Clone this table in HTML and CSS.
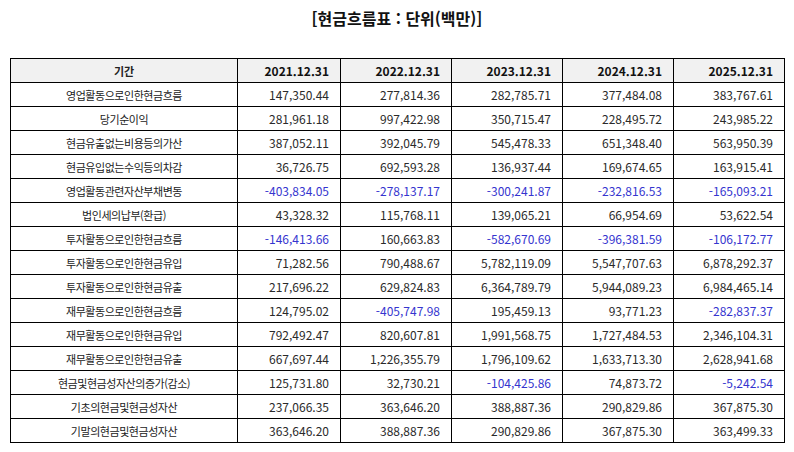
FILE: index.html
```html
<!DOCTYPE html>
<html lang="ko">
<head>
<meta charset="utf-8">
<title>현금흐름표</title>
<link rel="stylesheet" href="styles.css">
</head>
<body>
<div class="page">
  <h1 class="title">[현금흐름표 : 단위(백만)]</h1>
  <table class="cf">
    <colgroup>
      <col class="c-label"><col class="c-2021"><col class="c-yr"><col class="c-yr"><col class="c-yr"><col class="c-yr">
    </colgroup>
    <thead>
      <tr><th class="lbl">기간</th><th>2021.12.31</th><th>2022.12.31</th><th>2023.12.31</th><th>2024.12.31</th><th>2025.12.31</th></tr>
    </thead>
    <tbody>
      <tr><td class="lbl">영업활동으로인한현금흐름</td><td>147,350.44</td><td>277,814.36</td><td>282,785.71</td><td>377,484.08</td><td>383,767.61</td></tr>
      <tr><td class="lbl">당기순이익</td><td>281,961.18</td><td>997,422.98</td><td>350,715.47</td><td>228,495.72</td><td>243,985.22</td></tr>
      <tr><td class="lbl">현금유출없는비용등의가산</td><td>387,052.11</td><td>392,045.79</td><td>545,478.33</td><td>651,348.40</td><td>563,950.39</td></tr>
      <tr><td class="lbl">현금유입없는수익등의차감</td><td>36,726.75</td><td>692,593.28</td><td>136,937.44</td><td>169,674.65</td><td>163,915.41</td></tr>
      <tr><td class="lbl">영업활동관련자산부채변동</td><td class="neg">-403,834.05</td><td class="neg">-278,137.17</td><td class="neg">-300,241.87</td><td class="neg">-232,816.53</td><td class="neg">-165,093.21</td></tr>
      <tr><td class="lbl">법인세의납부(환급)</td><td>43,328.32</td><td>115,768.11</td><td>139,065.21</td><td>66,954.69</td><td>53,622.54</td></tr>
      <tr><td class="lbl">투자활동으로인한현금흐름</td><td class="neg">-146,413.66</td><td>160,663.83</td><td class="neg">-582,670.69</td><td class="neg">-396,381.59</td><td class="neg">-106,172.77</td></tr>
      <tr><td class="lbl">투자활동으로인한현금유입</td><td>71,282.56</td><td>790,488.67</td><td>5,782,119.09</td><td>5,547,707.63</td><td>6,878,292.37</td></tr>
      <tr><td class="lbl">투자활동으로인한현금유출</td><td>217,696.22</td><td>629,824.83</td><td>6,364,789.79</td><td>5,944,089.23</td><td>6,984,465.14</td></tr>
      <tr><td class="lbl">재무활동으로인한현금흐름</td><td>124,795.02</td><td class="neg">-405,747.98</td><td>195,459.13</td><td>93,771.23</td><td class="neg">-282,837.37</td></tr>
      <tr><td class="lbl">재무활동으로인한현금유입</td><td>792,492.47</td><td>820,607.81</td><td>1,991,568.75</td><td>1,727,484.53</td><td>2,346,104.31</td></tr>
      <tr><td class="lbl">재무활동으로인한현금유출</td><td>667,697.44</td><td>1,226,355.79</td><td>1,796,109.62</td><td>1,633,713.30</td><td>2,628,941.68</td></tr>
      <tr><td class="lbl">현금및현금성자산의증가(감소)</td><td>125,731.80</td><td>32,730.21</td><td class="neg">-104,425.86</td><td>74,873.72</td><td class="neg">-5,242.54</td></tr>
      <tr><td class="lbl">기초의현금및현금성자산</td><td>237,066.35</td><td>363,646.20</td><td>388,887.36</td><td>290,829.86</td><td>367,875.30</td></tr>
      <tr><td class="lbl">기말의현금및현금성자산</td><td>363,646.20</td><td>388,887.36</td><td>290,829.86</td><td>367,875.30</td><td>363,499.33</td></tr>
    </tbody>
  </table>
</div>
</body>
</html>
```

FILE: styles.css
```css
html, body {
  margin: 0;
  padding: 0;
  background: #ffffff;
}

.page {
  width: 794px;
  font-family: "Noto Sans CJK KR", "Noto Sans", sans-serif;
  color: #222222;
}

.title {
  margin: 0;
  padding-top: 6px;
  height: 58px;
  box-sizing: border-box;
  text-align: center;
  font-size: 16px;
  line-height: 24px;
  font-weight: bold;
  color: #111111;
}

.cf {
  margin-left: 10px;
  width: 775px;
  table-layout: fixed;
  border-collapse: collapse;
  border: 1px solid #000000;
}

.c-label { width: 227px; }
.c-2021 { width: 103px; }
.c-yr { width: 111px; }

.cf th,
.cf td {
  border: 1px solid #000000;
  height: 23px;
  padding: 0 11px 0 4px;
  text-align: right;
  font-size: 12px;
  line-height: 14px;
  white-space: nowrap;
}

.cf th {
  background: #f1f1f1;
  font-weight: bold;
  color: #111111;
}

.cf td {
  font-weight: normal;
  color: #2a2a2a;
}

.cf .lbl {
  text-align: center;
  padding: 0 4px;
  font-size: 11px;
  letter-spacing: -0.45px;
  color: #222222;
}

.cf th.lbl {
  font-size: 11px;
  letter-spacing: 0;
}

.cf td.neg {
  color: #3535cf;
}
```
